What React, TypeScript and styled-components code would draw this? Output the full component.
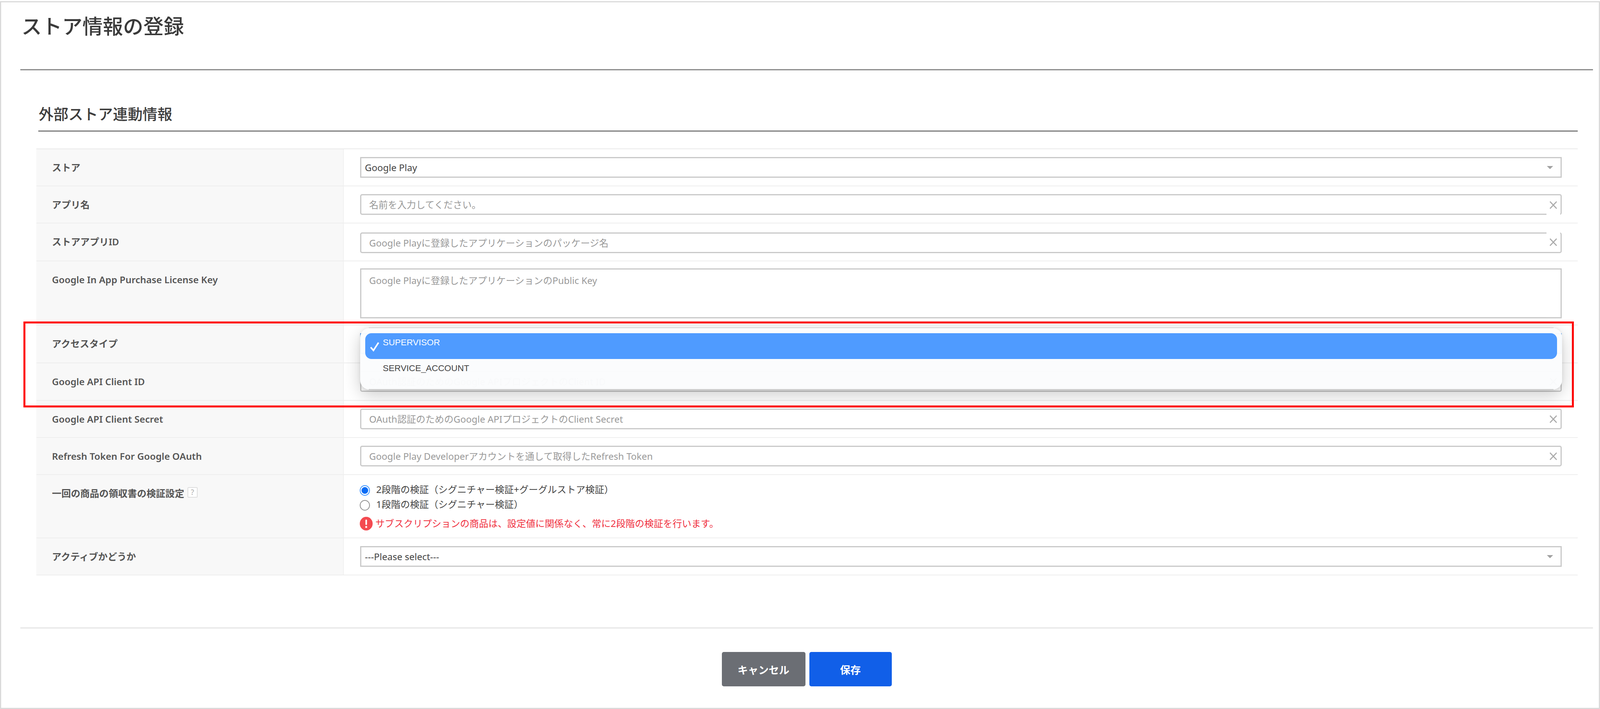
import React from "react";
import styled, { createGlobalStyle } from "styled-components";

const Global = createGlobalStyle`
  html, body { margin: 0; padding: 0; background: #fff; }
  body { font-family: "Noto Sans", "Noto Sans CJK JP", sans-serif; color: #444; }
  * { box-sizing: border-box; }
`;

const Frame = styled.div`
  position: relative;
  width: 100%;
  height: calc(100vh - 3px);
  margin-top: 3px;
  border: 3px solid #dadada;
  background: #fff;
  overflow: hidden;
  display: flex;
  flex-direction: column;
  padding: 0 15px 0 49px;
`;

const Header = styled.header`
  height: 174px;
  flex: none;
  border-bottom: 3px solid #8a8a8a;
  padding: 25px 0 0 3px;
`;

const Title = styled.h1`
  margin: 0;
  font-size: 52px;
  line-height: 72px;
  font-weight: 500;
  color: #3a3a3a;
`;

const Section = styled.section`
  margin: 0 39px 0 41px;
  flex: none;
`;

const SectionHead = styled.div`
  height: 157px;
  margin-left: 5px;
  padding: 83px 0 0 1px;
  border-bottom: 3px solid #7c7c7c;
`;

const SectionTitle = styled.h2`
  margin: 0;
  font-size: 38px;
  line-height: 56px;
  font-weight: 500;
  color: #3c3c3c;
`;

const Table = styled.div`
  margin-top: 43px;
  border-top: 2px solid #eaeaea;
`;

const Row = styled.div<{ $h: number }>`
  display: grid;
  grid-template-columns: 787px 1fr;
  height: ${(p) => p.$h}px;
  border-bottom: 2px solid #eeeeee;
`;

const Label = styled.div`
  background: #f8f8f8;
  border-right: 2px solid #f0f0f0;
  padding: 28px 0 0 40px;
  font-size: 24.2px;
  line-height: 38px;
  font-weight: 600;
  color: #555;
  display: flex;
  align-items: flex-start;
  gap: 8px;
`;

const Cell = styled.div<{ $top?: number }>`
  padding: ${(p) => p.$top ?? 20}px 41px 0 42px;
`;

const FieldBox = styled.div<{ $h?: number; $round?: boolean; $focus?: boolean }>`
  position: relative;
  height: ${(p) => p.$h ?? 53}px;
  border: 3px solid ${(p) => (p.$focus ? "#3f8fe8" : "#c9c9c9")};
  border-radius: ${(p) => (p.$round ? "5px" : "0")};
  background: #fff;
  display: flex;
  align-items: ${(p) => (p.$h ? "flex-start" : "center")};
  padding: ${(p) => (p.$h ? "10px 20px" : "0 20px")};
  font-size: 24px;
  line-height: 36px;
  color: #999;
`;

const SelectBox = styled(FieldBox)`
  padding: 0 9px;
  color: #444;
`;

const Arrow = styled.span`
  width: 0;
  height: 0;
  margin-left: auto;
  border-left: 8px solid transparent;
  border-right: 8px solid transparent;
  border-top: 8px solid #a2a2a2;
  margin-right: 10px;
`;

const ClearBtn = styled.span<{ $notch?: "top" | "bottom" }>`
  position: absolute;
  right: 1px;
  top: ${(p) => (p.$notch === "top" ? -3 : 0)}px;
  bottom: ${(p) => (p.$notch === "bottom" ? -3 : 0)}px;
  width: 35px;
  background: ${(p) => (p.$notch ? "#fff" : "transparent")};
  display: flex;
  align-items: center;
  justify-content: center;
`;

const Help = styled.span`
  width: 26px;
  height: 27px;
  margin-top: 3px;
  border: 2px solid #dedede;
  border-radius: 3px;
  font-size: 19px;
  line-height: 23px;
  text-align: center;
  color: #aaa;
  font-weight: 400;
  background: #fff;
`;

const RadioRow = styled.label`
  display: flex;
  align-items: center;
  height: 38px;
  gap: 16px;
  margin-left: -1px;
  font-size: 24.2px;
  line-height: 36px;
  color: #444;
`;

const RadioDot = styled.span<{ $on?: boolean }>`
  flex: none;
  width: 26px;
  height: 27px;
  margin-top: 4px;
  border-radius: 50%;
  border: 2px solid ${(p) => (p.$on ? "#3b93ff" : "#8f8f8f")};
  background: ${(p) => (p.$on ? "radial-gradient(circle, #0a6cf5 0 8px, #fff 9px)" : "#fff")};
`;

const Warning = styled.div`
  display: flex;
  align-items: center;
  gap: 7px;
  margin: 12px 0 0 -1px;
  font-size: 24.1px;
  line-height: 36px;
  color: #f0313f;
`;

const Footer = styled.footer`
  margin-top: 133px;
  flex: none;
  border-top: 3px solid #e6e6e6;
  display: flex;
  justify-content: center;
  gap: 10px;
  padding-top: 60px;
`;

const Button = styled.button<{ $primary?: boolean }>`
  height: 88px;
  width: ${(p) => (p.$primary ? 211 : 214)}px;
  border: none;
  border-radius: 5px;
  background: ${(p) => (p.$primary ? "#115fe8" : "#6b6e74")};
  color: #fff;
  font-family: inherit;
  font-size: 26.5px;
  font-weight: 700;
`;

const Highlight = styled.div`
  position: absolute;
  left: 57px;
  top: 817px;
  width: 3969px;
  height: 220px;
  border: 5px solid #f00;
  pointer-events: none;
`;

const Popup = styled.div`
  position: absolute;
  left: 919px;
  top: 834px;
  width: 3077px;
  height: 157px;
  padding: 13px;
  border-radius: 24px;
  background: rgba(251, 252, 253, 0.97);
  box-shadow: 0 14px 44px rgba(0, 0, 0, 0.2), 0 0 10px rgba(0, 0, 0, 0.08);
  font-family: "Liberation Sans", sans-serif;
  font-size: 22.4px;
  display: flex;
  flex-direction: column;

  &::before,
  &::after {
    content: "";
    position: absolute;
    left: 22px;
    right: 22px;
    height: 2px;
    background: #c6c6c6;
  }
  &::before { top: -2px; background: #d6d6d6; }
  &::after { bottom: -1px; }
`;

const Option = styled.div<{ $on?: boolean }>`
  position: relative;
  height: 66px;
  flex: none;
  border-radius: 16px;
  padding: 10px 0 0 45px;
  line-height: 28px;
  background: ${(p) => (p.$on ? "#4f9bff" : "transparent")};
  color: ${(p) => (p.$on ? "#fff" : "#444")};
`;

const CheckMark = styled.svg`
  position: absolute;
  left: 12px;
  top: 22px;
`;

const X = () => (
  <svg width="21" height="22" viewBox="0 0 21 22" fill="none" stroke="#aaa" strokeWidth="2.6">
    <path d="M2 2 L19 20 M19 2 L2 20" />
  </svg>
);

const WarnIcon = () => (
  <svg width="33" height="35" viewBox="0 0 33 35">
    <ellipse cx="16.5" cy="17.5" rx="16.5" ry="17.5" fill="#f44a50" />
    <rect x="14.5" y="7" width="4" height="14" rx="2" fill="#fff" />
    <circle cx="16.5" cy="26" r="2.5" fill="#fff" />
  </svg>
);

const Input = ({ ph, notch }: { ph: string; notch?: "top" | "bottom" }) => (
  <FieldBox $round>
    {ph}
    <ClearBtn $notch={notch}>
      <X />
    </ClearBtn>
  </FieldBox>
);

export default function App() {
  return (
    <Frame>
      <Global />
      <Header>
        <Title>ストア情報の登録</Title>
      </Header>
      <Section>
        <SectionHead>
          <SectionTitle>外部ストア連動情報</SectionTitle>
        </SectionHead>
        <Table>
          <Row $h={95}>
            <Label>ストア</Label>
            <Cell>
              <SelectBox>
                Google Play
                <Arrow />
              </SelectBox>
            </Cell>
          </Row>
          <Row $h={95}>
            <Label>アプリ名</Label>
            <Cell>
              <Input ph="名前を入力してください。" notch="bottom" />
            </Cell>
          </Row>
          <Row $h={97}>
            <Label>ストアアプリID</Label>
            <Cell $top={23}>
              <Input ph="Google Playに登録したアプリケーションのパッケージ名" notch="top" />
            </Cell>
          </Row>
          <Row $h={164}>
            <Label>Google In App Purchase License Key</Label>
            <Cell $top={18}>
              <FieldBox $h={128}>Google Playに登録したアプリケーションのPublic Key</FieldBox>
            </Cell>
          </Row>
          <Row $h={97}>
            <Label>アクセスタイプ</Label>
            <Cell>
              <SelectBox $focus />
            </Cell>
          </Row>
          <Row $h={96}>
            <Label>Google API Client ID</Label>
            <Cell>
              <Input ph="OAuth認証のためのGoogle APIプロジェクトのClient ID" />
            </Cell>
          </Row>
          <Row $h={95}>
            <Label>Google API Client Secret</Label>
            <Cell>
              <Input ph="OAuth認証のためのGoogle APIプロジェクトのClient Secret" />
            </Cell>
          </Row>
          <Row $h={95}>
            <Label>Refresh Token For Google OAuth</Label>
            <Cell>
              <Input ph="Google Play Developerアカウントを通して取得したRefresh Token" />
            </Cell>
          </Row>
          <Row $h={162}>
            <Label>
              一回の商品の領収書の検証設定
              <Help>?</Help>
            </Label>
            <Cell $top={18}>
              <RadioRow>
                <RadioDot $on />
                2段階の検証（シグニチャー検証+グーグルストア検証）
              </RadioRow>
              <RadioRow>
                <RadioDot />
                1段階の検証（シグニチャー検証）
              </RadioRow>
              <Warning>
                <WarnIcon />
                サブスクリプションの商品は、設定値に関係なく、常に2段階の検証を行います。
              </Warning>
            </Cell>
          </Row>
          <Row $h={95}>
            <Label>アクティブかどうか</Label>
            <Cell>
              <SelectBox>
                ---Please select---
                <Arrow />
              </SelectBox>
            </Cell>
          </Row>
        </Table>
      </Section>
      <Footer>
        <Button>キャンセル</Button>
        <Button $primary>保存</Button>
      </Footer>
      <Highlight />
      <Popup>
        <Option $on>
          <CheckMark width="24" height="25" viewBox="0 0 24 25" fill="none" stroke="#fff" strokeWidth="4">
            <path d="M2 14 L9 22 L22 2" />
          </CheckMark>
          SUPERVISOR
        </Option>
        <Option>SERVICE_ACCOUNT</Option>
      </Popup>
    </Frame>
  );
}
